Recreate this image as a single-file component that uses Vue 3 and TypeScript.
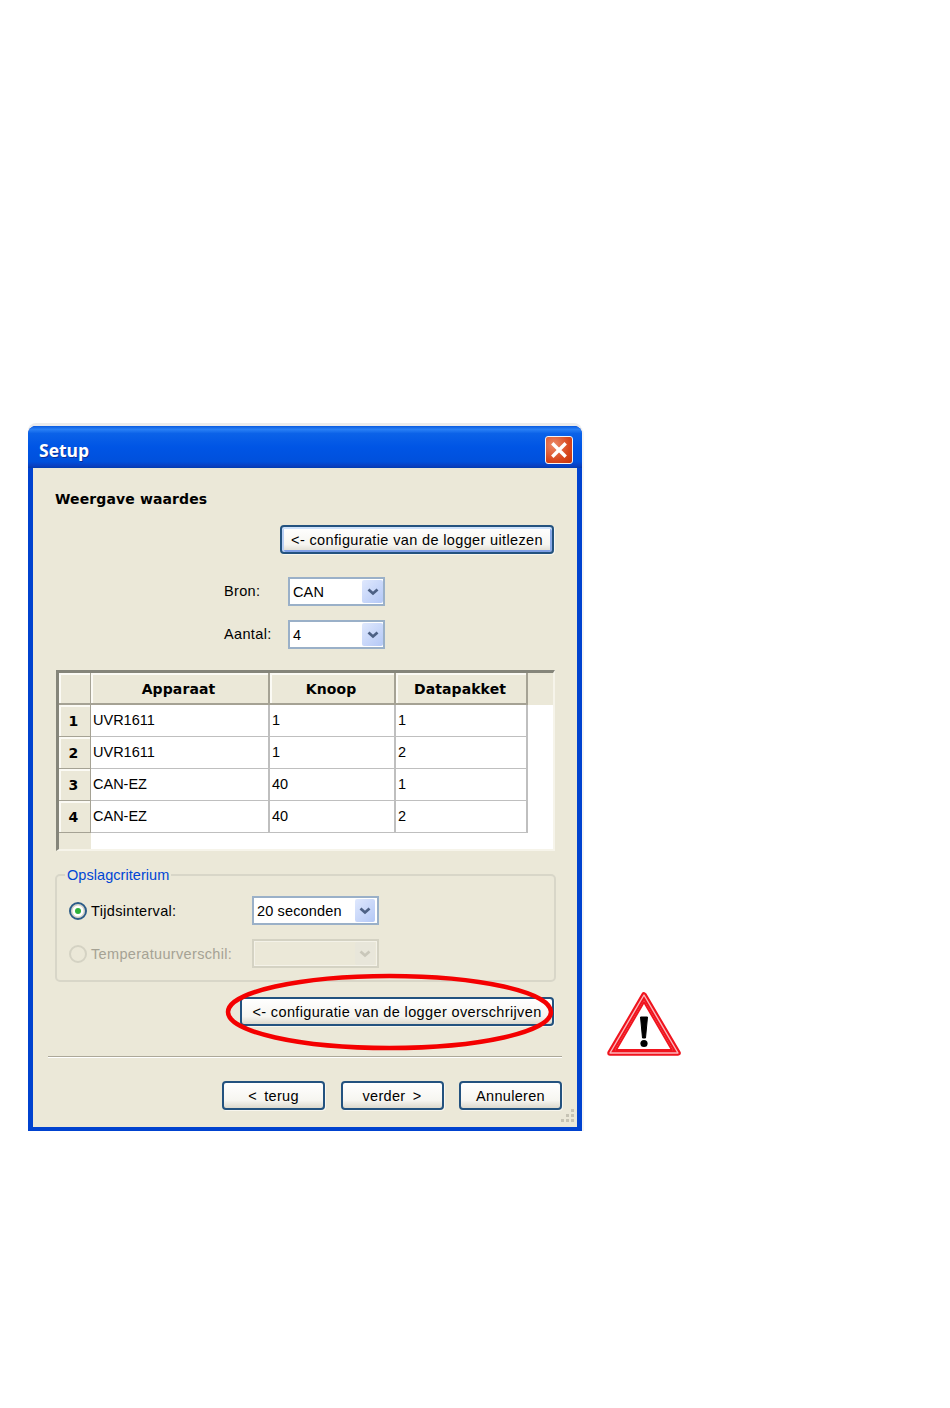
<script setup lang="ts">
const columns: string[] = ['Apparaat', 'Knoop', 'Datapakket']
const rows: { id: number; cells: string[] }[] = [
  { id: 1, cells: ['UVR1611', '1', '1'] },
  { id: 2, cells: ['UVR1611', '1', '2'] },
  { id: 3, cells: ['CAN-EZ', '40', '1'] },
  { id: 4, cells: ['CAN-EZ', '40', '2'] },
]
</script>

<template>
  <div class="page">
    <div class="window">
      <div class="titlebar">
        <span class="title">Setup</span>
        <span class="close">
          <svg width="20" height="20" viewBox="0 0 20 20"><path d="M4.5 4.5 15.500 15.500M15.500 4.500 4.500 15.500" stroke="#fff" stroke-width="3.400" stroke-linecap="square" fill="none" /></svg>
        </span>
      </div>
      <div class="client">
        <div class="heading">Weergave waardes</div>
        <div class="btn default read">&lt;- configuratie van de logger uitlezen</div>

        <div class="form-row first">
          <span class="form-label">Bron:</span>
          <div class="combo small"><span>CAN</span><i class="arrow"><svg width="12" height="8" viewBox="0 0 12 8"><path d="M1.500 1.500 6 5.500 10.500 1.500" stroke="#4d6185" stroke-width="2.800" fill="none" /></svg></i></div>
        </div>
        <div class="form-row">
          <span class="form-label">Aantal:</span>
          <div class="combo small"><span>4</span><i class="arrow"><svg width="12" height="8" viewBox="0 0 12 8"><path d="M1.500 1.500 6 5.500 10.500 1.500" stroke="#4d6185" stroke-width="2.800" fill="none" /></svg></i></div>
        </div>

        <div class="grid">
          <div class="hcell corner"></div>
          <div v-for="c in columns" :key="c" class="hcell">{{ c }}</div>
          <div class="hcell filler"></div>
          <template v-for="r in rows" :key="r.id">
            <div class="hcell rowhead">{{ r.id }}</div>
            <div v-for="(cell, i) in r.cells" :key="i" class="cell">{{ cell }}</div>
            <div class="blank"></div>
          </template>
          <div class="foot-head"></div>
          <div class="foot"></div>
        </div>

        <div class="group">
          <span class="legend">Opslagcriterium</span>
          <div class="group-row">
            <span class="radio on"><b></b></span>
            <span class="radio-label">Tijdsinterval:</span>
            <div class="combo wide"><span>20 seconden</span><i class="arrow"><svg width="12" height="8" viewBox="0 0 12 8"><path d="M1.500 1.500 6 5.500 10.500 1.500" stroke="#4d6185" stroke-width="2.800" fill="none" /></svg></i></div>
          </div>
          <div class="group-row second">
            <span class="radio"></span>
            <span class="radio-label off">Temperatuurverschil:</span>
            <div class="combo wide disabled"><span></span><i class="arrow"><svg width="12" height="8" viewBox="0 0 12 8"><path d="M1.500 1.500 6 5.500 10.500 1.500" stroke="#c9c7ba" stroke-width="2.800" fill="none" /></svg></i></div>
          </div>
        </div>

        <div class="btn write">&lt;- configuratie van de logger overschrijven</div>
        <div class="separator"></div>
        <div class="footer">
          <div class="btn nav">&lt; terug</div>
          <div class="btn nav">verder &gt;</div>
          <div class="btn nav">Annuleren</div>
        </div>
        <svg class="grip" width="15" height="15" viewBox="0 0 15 15" fill="#c6c3b4">
          <rect x="11" y="1" width="3" height="3" /><rect x="6" y="6" width="3" height="3" /><rect x="11" y="6" width="3" height="3" />
          <rect x="1" y="11" width="3" height="3" /><rect x="6" y="11" width="3" height="3" /><rect x="11" y="11" width="3" height="3" />
        </svg>
      </div>
    </div>

    <svg class="ellipse" width="332" height="80" viewBox="0 0 332 80">
      <ellipse cx="165.500" cy="40" rx="161.500" ry="36" fill="none" stroke="#f40000" stroke-width="4.500" />
    </svg>
    <svg class="warning" width="76" height="68" viewBox="0 0 76 68">
      <path d="M38 5 72 63H4Z" fill="#fff" stroke="#f0141e" stroke-width="5.500" stroke-linejoin="round" />
      <path d="M38 5 72 63H4Z" fill="none" stroke="#fbb6ba" stroke-width="1.400" stroke-linejoin="round" />
      <path d="M38 12 66 60H10Z" fill="#fff" stroke="#f0141e" stroke-width="2" stroke-linejoin="round" />
      <path d="M34.500 27h7l-2 21h-3Z" fill="#000" stroke="#000" stroke-linejoin="round" />
      <circle cx="38" cy="53.500" r="3.600" fill="#000" />
    </svg>
  </div>
</template>

<style>
html, body { margin: 0; background: #fff; }
</style>

<style scoped>
.page {
  position: relative;
  width: 950px;
  height: 1408px;
  padding: 426px 0 0 28px;
  box-sizing: border-box;
  font-family: "Liberation Sans", sans-serif;
  font-size: 14.5px;
  color: #000;
  overflow: hidden;
}
.window {
  width: 554px;
  height: 705px;
  box-sizing: border-box;
  display: flex;
  flex-direction: column;
  background: #0831d9;
  border-radius: 8px 8px 0 0;
  box-shadow: 0 -3px 0 #ececec, 2px 0 0 #f4f4f4;
  border: solid #0042cf;
  border-width: 0 5px 4px;
}
.titlebar {
  height: 42px;
  margin: 0 -5px;
  padding: 4px 9px 0 11px;
  box-sizing: border-box;
  display: flex;
  align-items: center;
  justify-content: space-between;
  border-radius: 8px 8px 0 0;
  background: linear-gradient(180deg, #0a5be0 0%, #2a80f5 8%, #0b62e8 18%, #0055e5 50%, #0050dc 85%, #0a3fc0 95%, #003cb0 100%);
}
.title {
  margin-top: 2px;
  font-family: "Open Sans", sans-serif;
  font-weight: 700;
  font-size: 17.500px;
  color: #fff;
  text-shadow: 1px 1px 0 #0a2f9a;
}
.close {
  width: 28px;
  height: 28px;
  box-sizing: border-box;
  margin-top: 2px;
  display: flex;
  align-items: center;
  justify-content: center;
  border: 1px solid #f4f4f4;
  border-radius: 3px;
  background: radial-gradient(circle at 30% 30%, #ec8a68, #d8481f 60%, #c83208);
}
.client {
  position: relative;
  flex: 1;
  display: flex;
  flex-direction: column;
  background: #ebe8d8;
  padding: 23px 21px 0 22px;
  min-height: 0;
}
.heading {
  font-family: "DejaVu Sans", sans-serif;
  font-weight: 700;
  font-size: 14px;
  line-height: 16px;
  letter-spacing: 0.12px;
}
.btn {
  box-sizing: border-box;
  height: 29px;
  display: flex;
  align-items: center;
  justify-content: center;
  border: 2px solid #23527f;
  border-radius: 4px;
  background: linear-gradient(180deg, #fff 0%, #f6f5f0 70%, #dcd9ce 100%);
  box-shadow: 1px 1px 0 #f8f6ee;
  white-space: nowrap;
  letter-spacing: 0.36px;
}
.btn.default {
  box-shadow: inset 0 2px 0 #cfe2fb, inset 2px 0 0 #b9d0f5, inset -2px 0 0 #8aa9e8, inset 0 -2px 0 #7f9fe6, 1px 1px 0 #f8f6ee;
}
.read {
  margin-top: 18px;
  width: 274px;
  align-self: flex-end;
  margin-right: 2px;
}
.form-row {
  margin-top: 14px;
  padding-left: 169px;
  display: flex;
  align-items: center;
}
.form-row.first { margin-top: 23px; }
.form-label {
  width: 64px;
  margin-top: -2px;
  letter-spacing: 0.35px;
}
.combo {
  box-sizing: border-box;
  height: 29px;
  display: flex;
  align-items: center;
  justify-content: space-between;
  padding: 0 0 0 3px;
  background: #fff;
  border: 2px solid #9ab0c8;
  letter-spacing: 0.15px;
}
.combo.small { width: 97px; }
.combo.wide { width: 127px; }
.combo.wide .arrow {
  width: 20px;
  margin-right: 2px;
}
.combo.disabled {
  background: #ebe8d8;
  border-color: #d4d2c3;
  box-shadow: inset 0 0 0 1px #f4f2e8;
}
.arrow {
  width: 21px;
  height: 23px;
  display: flex;
  align-items: center;
  justify-content: center;
  background: linear-gradient(135deg, #dfe8fd, #b4c8f6);
  border-radius: 2px;
}
.disabled .arrow { background: #e8e6da; }
.grid {
  margin: 21px 0 0 1px;
  width: 499px;
  height: 181px;
  box-sizing: border-box;
  border-style: solid;
  border-width: 3px 2px 2px 3px;
  border-color: #85857a #f6f4ea #f6f4ea #85857a;
  display: grid;
  grid-template-columns: 32px 179px 126px 132px 1fr;
  grid-template-rows: 32px 32px 32px 32px 32px 1fr;
  background: #fff;
}
.hcell {
  box-sizing: border-box;
  display: flex;
  align-items: center;
  justify-content: center;
  padding: 2px 2px 0 0;
  background: #ebe8d8;
  font-family: "DejaVu Sans", sans-serif;
  font-weight: 700;
  font-size: 14px;
  letter-spacing: 0.1px;
  border-right: 2px solid #a5a294;
  border-bottom: 2px solid #a5a294;
  box-shadow: inset 2px 2px 0 #fbfaf4;
}
.hcell.filler {
  border: 0;
  box-shadow: none;
}
.hcell.corner { border-right-width: 1px; }
.hcell.rowhead {
  border-width: 0 1px 1px 0;
  border-color: #a5a294;
  padding: 0 2px 0 0;
}
.cell {
  box-sizing: border-box;
  display: flex;
  align-items: center;
  padding: 0 0 2px 2px;
  border-right: 2px solid #bfbfbf;
  border-bottom: 1px solid #bfbfbf;
}
.blank { background: #fff; }
.foot-head { background: #ebe8d8; }
.foot { grid-column: 2 / -1; background: #fff; }
.group {
  position: relative;
  margin-top: 23px;
  height: 108px;
  box-sizing: border-box;
  width: 501px;
  border: 2px solid #d8d6c8;
  border-radius: 5px;
  padding: 20px 0 0 12px;
}
.legend {
  position: absolute;
  top: -9px;
  left: 8px;
  padding: 0 2px;
  line-height: 16px;
  background: #ebe8d8;
  color: #0046d5;
  letter-spacing: 0.05px;
}
.group-row {
  display: flex;
  align-items: center;
  height: 29px;
}
.group-row.second { margin-top: 14px; }
.radio {
  box-sizing: border-box;
  width: 18px;
  height: 18px;
  border-radius: 50%;
  border: 2px solid #d4d2c3;
  display: flex;
  align-items: center;
  justify-content: center;
}
.radio.on {
  border-color: #2c5c88;
  background: #fff;
  box-shadow: inset 0 0 0 1.500px #d6d3c6;
}
.radio b {
  width: 6px;
  height: 6px;
  border-radius: 50%;
  background: #2fb13a;
}
.radio-label {
  width: 161px;
  margin-left: 4px;
  letter-spacing: 0.33px;
}
.radio-label.off { color: #a5a294; }
.write {
  margin-top: 15px;
  padding-top: 1px;
  width: 314px;
  align-self: flex-end;
  margin-right: 2px;
}
.separator {
  margin: 30px -6px 0 -7px;
  height: 1px;
  background: #aca899;
  border-bottom: 1px solid #fff;
  flex: none;
}
.footer {
  margin: 23px -6px 0 0;
  display: flex;
  justify-content: flex-end;
  gap: 15.500px;
}
.nav {
  width: 103px;
  word-spacing: 3px;
  letter-spacing: 0.3px;
}
.grip {
  position: absolute;
  right: 2px;
  bottom: 4px;
}
.ellipse {
  position: absolute;
  left: 224px;
  top: 972px;
}
.warning {
  position: absolute;
  left: 606px;
  top: 990px;
  filter: blur(0.4px);
}
</style>
